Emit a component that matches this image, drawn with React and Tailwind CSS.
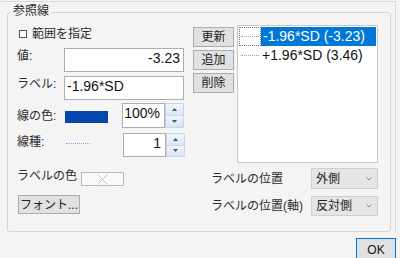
function Tri({ up }) {
  return (
    <svg width="5" height="3" viewBox="0 0 5 3" className="block">
      {up ? <polygon points="2.5,0 5,3 0,3" fill="#555" /> : <polygon points="0,0 5,0 2.5,3" fill="#555" />}
    </svg>
  );
}

function Spinner({ value, tall }) {
  const h = tall ? "h-[25px]" : "h-[24px]";
  return (
    <div className="flex">
      <div className={`w-[43px] ${h} border border-[#adadad] bg-white text-right pr-[4px] text-[14px] leading-[18px] text-[#111]`}>
        {value}
      </div>
      <div className={`w-[19px] ${h} flex flex-col`}>
        <div className="flex-1 border border-[#c6d6ea] bg-linear-to-b from-[#f1f6fc] to-[#dce7f5] flex items-center justify-center">
          <Tri up />
        </div>
        <div className="flex-1 border border-t-0 border-[#c6d6ea] bg-linear-to-b from-[#eef4fb] to-[#d8e4f4] flex items-center justify-center">
          <Tri />
        </div>
      </div>
    </div>
  );
}

function Chevron() {
  return (
    <svg width="6" height="4" viewBox="0 0 6 4" className="block">
      <polyline points="0.5,0.5 3,3 5.5,0.5" fill="none" stroke="#888" strokeWidth="1" />
    </svg>
  );
}

function Select({ text, tall }) {
  return (
    <div className={`w-[67px] ${tall ? "h-[21px]" : "h-[20px]"} border border-[#cfcfcf] bg-[#e5e5e5] flex items-center pl-[4px] pr-[5px]`}>
      <span className="text-[12px] leading-[16px] text-[#222]">{text}</span>
      <span className="ml-auto"><Chevron /></span>
    </div>
  );
}

function Btn({ children, w = "w-[41px]", h = "h-[20px]" }) {
  return (
    <div className={`${w} ${h} border border-[#adadad] bg-[#e1e1e1] flex items-center justify-center text-[12px] leading-[16px] text-[#222]`}>
      {children}
    </div>
  );
}

export default function App() {
  return (
    <div className="w-[400px] h-[258px] bg-[#f4f4f4] overflow-hidden flex flex-col text-[#2b2b2b] font-['Liberation_Sans','Noto_Sans_CJK_JP',sans-serif]">
      <div className="mt-px h-[231px] w-[396px] shrink-0 border-t border-r border-[#d9d9d9] pl-[7px] pt-[10px]">
        <div className="w-[384px] h-[220px] border border-[#d4d4d4] rounded-[3px] flex flex-col">
          <div className="-mt-[10px] ml-[3px] w-fit px-[2px] bg-[#f4f4f4] text-[12px] leading-[16px]">参照線</div>

          {/* top section */}
          <div className="mt-[6px] flex items-start pl-[9px]">
            <div className="w-[168px] flex flex-col">
              <div className="mt-[2px] h-[14px] flex items-center">
                <span className="ml-[2px] w-[8px] h-[8px] border border-[#555] bg-white"></span>
                <span className="ml-[5px] text-[12px] leading-[14px]">範囲を指定</span>
              </div>

              <div className="mt-[7px] h-[24px] flex items-start">
                <span className="w-[47px] text-[12px] leading-[16px]">値:</span>
                <div className="w-[120px] h-[24px] border border-[#adadad] bg-white text-right pr-[3px] text-[14px] leading-[18px] text-[#111]">
                  -3.23
                </div>
              </div>

              <div className="mt-[4px] h-[24px] flex items-start">
                <span className="w-[47px] text-[12px] leading-[16px]">ラベル:</span>
                <div className="w-[120px] h-[24px] border border-[#adadad] bg-white pl-[2px] text-[14px] leading-[18px] text-[#111]">
                  -1.96*SD
                </div>
              </div>

              <div className="mt-[3px] h-[25px] flex items-start">
                <span className="mt-[5px] w-[47px] text-[12px] leading-[16px]">線の色:</span>
                <span className="mt-[8px] ml-px w-[43px] h-[12px] bg-[#0546ad]"></span>
                <div className="ml-[14px]">
                  <Spinner value="100%" tall />
                </div>
              </div>

              <div className="mt-[5px] h-[24px] flex items-start">
                <span className="mt-[1px] w-[47px] text-[12px] leading-[16px]">線種:</span>
                <span className="mt-[10px] ml-[2px] w-[24px] h-0 border-t border-dotted border-[#7fa6df]"></span>
                <div className="ml-[33px]">
                  <Spinner value="1" />
                </div>
              </div>
            </div>

            <div className="ml-[8px] mt-[2px] flex flex-col gap-[3px]">
              <Btn>更新</Btn>
              <Btn>追加</Btn>
              <Btn>削除</Btn>
            </div>

            <div className="ml-[3px] w-[141px] h-[138px] border border-[#c9c9c9] bg-white p-px flex flex-col">
              <div className="h-[19px] flex">
                <div className="w-[22px] h-[19px] border border-dotted border-[#777] flex items-center justify-center">
                  <span className="w-[18px] h-0 border-t border-dotted border-[#7fa6df]"></span>
                </div>
                <div className="flex-1 bg-[#0078d7] text-white pl-[2px] text-[14px] leading-[19px] whitespace-nowrap">
                  -1.96*SD (-3.23)
                </div>
              </div>
              <div className="h-[19px] flex">
                <div className="w-[22px] h-[19px] flex items-center justify-center">
                  <span className="w-[18px] h-0 border-t border-dotted border-[#7fa6df]"></span>
                </div>
                <div className="flex-1 text-[#111] pl-[1px] text-[14px] leading-[19px] whitespace-nowrap">
                  +1.96*SD (3.46)
                </div>
              </div>
            </div>
          </div>

          {/* bottom section */}
          <div className="mt-[5px] flex items-start pl-[9px]">
            <div className="flex flex-col">
              <div className="flex items-start">
                <span className="text-[12px] leading-[16px]">ラベルの色</span>
                <span className="mt-[4px] ml-[4px] w-[43px] h-[14px] border border-[#b8b8b8] bg-[#fafafa] flex items-center justify-center">
                  <svg width="11" height="11" viewBox="0 0 11 11" className="block">
                    <line x1="0.5" y1="0.5" x2="10.5" y2="10.5" stroke="#c4c4c4" strokeWidth="1" />
                    <line x1="10.5" y1="0.5" x2="0.5" y2="10.5" stroke="#c4c4c4" strokeWidth="1" />
                  </svg>
                </span>
              </div>
              <div className="mt-[9px] ml-px">
                <Btn w="w-[62px]" h="h-[19px]">フォント...</Btn>
              </div>
            </div>

            <div className="ml-auto mr-[12px] flex flex-col">
              <div className="h-[21px] flex items-center">
                <span className="w-[100px] text-[12px] leading-[16px]">ラベルの位置</span>
                <Select text="外側" tall />
              </div>
              <div className="mt-[7px] h-[20px] flex items-center">
                <span className="w-[100px] text-[12px] leading-[16px] whitespace-nowrap">ラベルの位置(軸)</span>
                <Select text="反対側" />
              </div>
            </div>
          </div>
        </div>
      </div>

      <div className="mt-[6px] self-end mr-[4px] w-[40px] h-[23px] shrink-0 border border-[#0078d7] bg-[#e1e1e1] flex items-center justify-center text-[12px] leading-[16px] text-[#111]">
        OK
      </div>
    </div>
  );
}
